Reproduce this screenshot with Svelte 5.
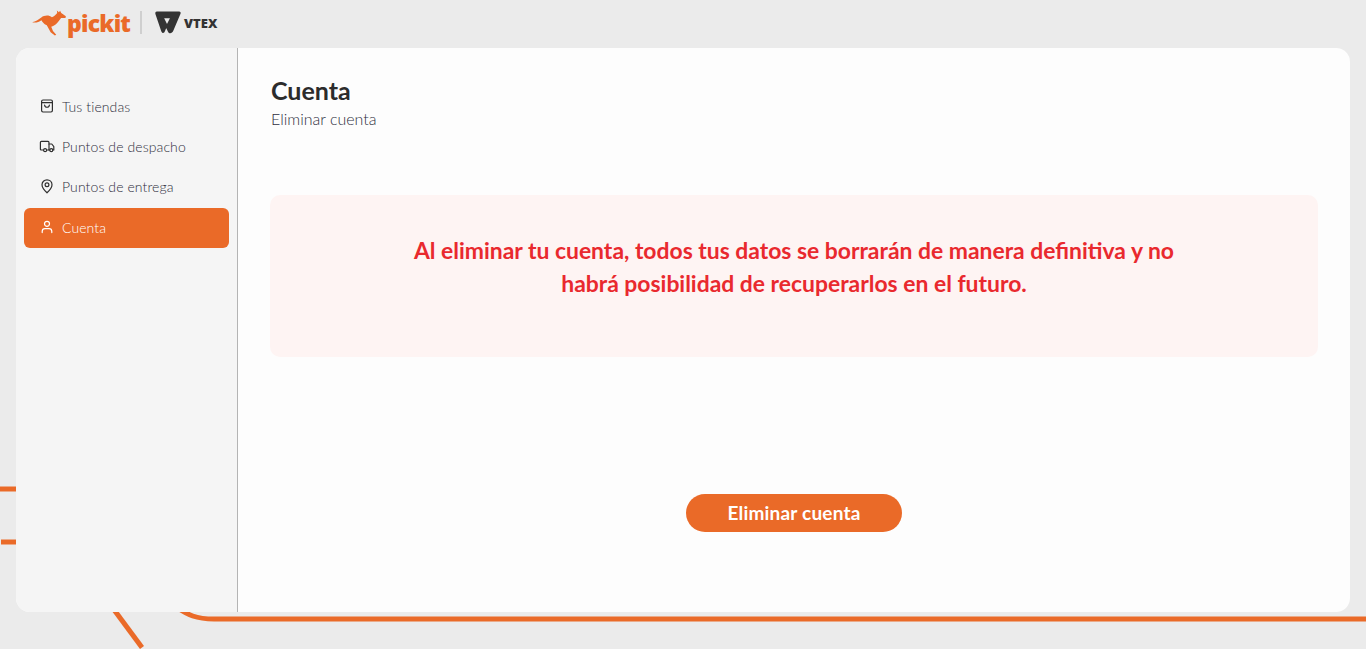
<script>
  const menu = [
    { label: 'Tus tiendas', icon: 'bag' },
    { label: 'Puntos de despacho', icon: 'truck' },
    { label: 'Puntos de entrega', icon: 'pin' },
    { label: 'Cuenta', icon: 'user', active: true }
  ];
</script>

<div class="page">
  <svg class="lines" width="1366" height="649" viewBox="0 0 1366 649" fill="none" stroke="#ea6a28" stroke-width="5">
    <path d="M0 489H20" />
    <path d="M1 542H20" />
    <path d="M112 607L142 647.5" />
    <path d="M176 607C188 615 196 619 214 619H1366" />
  </svg>

  <header class="topbar">
    <div class="brand">
      <svg class="roo" width="35" height="26" viewBox="0 0 36 27">
        <path
          fill="#ea6a28"
          d="M0 12.8C3.5 12 6.5 10 9.5 7.8C12.5 5.4 17.5 5 20.5 7.5C22.8 6.8 24.5 4.8 26 3L25.6 0.5L27.8 2.4L29 0.8L30.2 3.2L35 6.6L34.6 8.2L30 8.4C28.2 11 26.5 13.5 24 15.2C22.5 16.2 21 16.8 19.8 17.4L21.6 21.8L25 25.6L23.6 26.6L19.2 23L15.2 15.8C12 14.5 10.4 12.2 9.6 10.6C7 12.6 3.5 13.6 0 12.8Z"
        />
      </svg>
      <span class="pickit">pickit</span>
    </div>
    <span class="divider"></span>
    <div class="vtex">
      <svg width="26" height="24" viewBox="0 0 27 24">
        <path fill="#333" d="M2 0H25C26.5 0 27 1 26.5 2.5L19 20C18 22.5 15 24 13.5 21L11 16L15.5 7H9.5L13 14L10.5 20C9.5 23 7.5 23 6.5 20.5L0.5 3C0 1 0.5 0 2 0Z" />
      </svg>
      <span>VTEX</span>
    </div>
  </header>

  <main class="card">
    <aside class="sidebar">
      <nav class="menu">
        {#each menu as item}
          <div class="menu-item" class:active={item.active}>
            <svg class="menu-icon" width="16" height="16" viewBox="0 0 16 16" fill="none" stroke="currentColor" stroke-width="1.2" stroke-linecap="round" stroke-linejoin="round">
              {#if item.icon === 'bag'}
                <rect x="2.6" y="2" width="10.8" height="12" rx="1.4" />
                <path d="M2.6 4.6H13.4" />
                <path d="M5.6 7C5.8 10 10.2 10 10.4 7" />
              {:else if item.icon === 'truck'}
                <path d="M4.6 12H2.4C1.8 12 1.4 11.6 1.4 11V4.4C1.4 3.8 1.8 3.4 2.4 3.4H9C9.6 3.4 10 3.8 10 4.4V12H7.6" />
                <path d="M10 6H12.8L14.8 8.6V12H13.8" />
                <path d="M10 12H10.8" />
                <circle cx="6.1" cy="12.2" r="1.5" />
                <circle cx="12.3" cy="12.2" r="1.5" />
              {:else if item.icon === 'pin'}
                <path d="M8 14.8C5.4 12.4 3 10 3 6.8C3 4 5.2 1.8 8 1.8S13 4 13 6.8C13 10 10.6 12.4 8 14.8Z" />
                <circle cx="8" cy="6.8" r="1.9" />
              {:else}
                <circle cx="8" cy="4.8" r="2.5" />
                <path d="M3.2 13.6V12.4C3.2 10.8 4.4 9.6 6 9.6H10C11.6 9.6 12.8 10.8 12.8 12.4V13.6" />
              {/if}
            </svg>
            <span>{item.label}</span>
          </div>
        {/each}
      </nav>
    </aside>

    <section class="content">
      <h1>Cuenta</h1>
      <p class="subtitle">Eliminar cuenta</p>

      <div class="warning">
        <p>Al eliminar tu cuenta, todos tus datos se borrarán de manera definitiva y no habrá posibilidad de recuperarlos en el futuro.</p>
      </div>

      <div class="actions">
        <button type="button">Eliminar cuenta</button>
      </div>
    </section>
  </main>
</div>

<style>
  :global(body) {
    margin: 0;
    background: #ebebeb;
    font-family: Lato, 'Noto Sans', sans-serif;
  }

  .page {
    position: relative;
    height: 649px;
    overflow: hidden;
    padding: 0 16px;
    box-sizing: border-box;
  }

  .lines {
    position: absolute;
    top: 0;
    left: 0;
  }

  .topbar {
    position: relative;
    height: 48px;
    display: flex;
    align-items: center;
    padding-left: 16px;
    padding-bottom: 3px;
    box-sizing: border-box;
  }

  .brand {
    display: flex;
    align-items: center;
  }

  .pickit {
    font-family: 'Open Sans', sans-serif;
    font-size: 23px;
    line-height: 28px;
    font-weight: 800;
    letter-spacing: -0.8px;
    color: #ea6a28;
  }

  .divider {
    width: 2px;
    height: 23px;
    margin: 0 13px 0 10px;
    background: #cfcfcf;
  }

  .vtex {
    display: flex;
    align-items: center;
    gap: 3px;
    font-family: 'Open Sans', sans-serif;
    font-size: 13px;
    font-weight: 800;
    color: #333;
  }

  .card {
    position: relative;
    height: 564px;
    display: flex;
    border-radius: 14px;
    overflow: hidden;
    background: #fdfdfd;
  }

  .sidebar {
    width: 222px;
    flex-shrink: 0;
    box-sizing: border-box;
    padding: 39px 8px 0;
    background: #f5f5f5;
    border-right: 1px solid #b4b4b4;
  }

  .menu {
    width: 205px;
    display: flex;
    flex-direction: column;
  }

  .menu-item {
    height: 40px;
    box-sizing: border-box;
    display: flex;
    align-items: center;
    gap: 7px;
    padding: 0 0 2px 15px;
    border-radius: 6px;
    font-size: 14px;
    font-weight: 300;
    letter-spacing: 0.1px;
    color: #2f2f40;
  }

  .menu-item:last-child {
    margin-top: 1px;
  }

  .menu-icon {
    color: #2f2f2f;
    flex-shrink: 0;
  }

  .menu-item.active {
    background: #ea6a28;
    color: #fff;
  }

  .menu-item.active .menu-icon {
    color: #fff;
  }

  .content {
    flex: 1;
    box-sizing: border-box;
    padding: 27px 32px 0;
  }

  h1 {
    margin: 0 0 0 1px;
    font-size: 25px;
    line-height: 30px;
    font-weight: 700;
    color: #2c2c2c;
  }

  .subtitle {
    margin: 4px 0 0 1px;
    font-size: 16px;
    line-height: 20px;
    font-weight: 300;
    color: #2f2f40;
  }

  .warning {
    margin-top: 66px;
    height: 162px;
    box-sizing: border-box;
    padding: 39px 130px 0;
    border-radius: 10px;
    background: #fef4f3;
  }

  .warning p {
    margin: 0;
    font-size: 22.9px;
    line-height: 33px;
    font-weight: 700;
    text-align: center;
    color: #e9292e;
  }

  .actions {
    display: flex;
    justify-content: center;
    margin-top: 137px;
  }

  button {
    width: 216px;
    height: 38px;
    padding: 0 0 2px;
    border: none;
    border-radius: 19px;
    background: #ea6a28;
    color: #fff;
    font-family: inherit;
    font-size: 19px;
    font-weight: 700;
    letter-spacing: 0.2px;
  }
</style>
